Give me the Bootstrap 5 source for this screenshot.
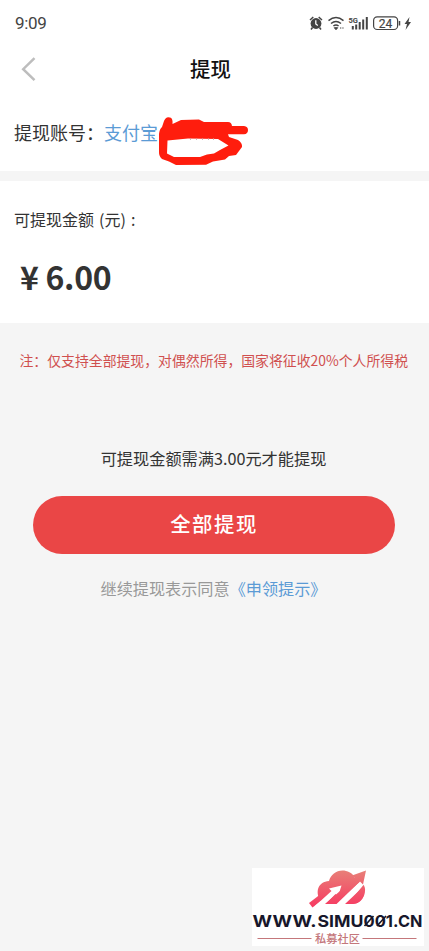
<!DOCTYPE html>
<html lang="zh-CN">
<head>
<meta charset="utf-8">
<meta name="viewport" content="width=device-width, initial-scale=1">
<title>提现</title>
<link href="https://cdn.jsdelivr.net/npm/bootstrap@5.3.0/dist/css/bootstrap.min.css" rel="stylesheet">
<style>
  body { font-family: "Noto Sans CJK SC", sans-serif; background: #f5f5f5; color: #333; }
  .screen { height: 951px; }
  .status-bar { height: 46px; padding: 0 16px 0 15px; color: #444; }
  .clock { font: 17px/46px Roboto, sans-serif; letter-spacing: -.3px; }
  .title-bar { height: 46px; display: grid; grid-template-columns: 60px 1fr 68px; }
  .title-bar h1 { font-size: 20.4px; font-weight: 500; color: #111; line-height: 45px; }
  .account { height: 79px; padding: 0 14px; font-size: 18px; line-height: 80px; }
  .tone-blue { color: #5b9bd5; }
  .scribble { left: 158px; top: 23px; }
  .balance { margin-top: 10px; height: 142px; padding: 26px 14px 0; }
  .balance-label { font-size: 16px; line-height: 24px; word-spacing: 1.5px; }
  .amount { font-size: 32px; font-weight: 700; line-height: 44px; margin: 23px 0 0 6px; letter-spacing: -.3px; }
  .note { font-size: 13.87px; line-height: 20px; color: #d0504f; margin-top: 27px; padding-left: 19.5px; }
  .limit { font-size: 16.2px; line-height: 24px; margin-top: 76px; padding-right: 2px; }
  .btn-all { --bs-btn-bg: #ea4646; --bs-btn-hover-bg: #dc3c3c; --bs-btn-border-color: transparent; --bs-btn-color: #fff; --bs-btn-hover-color: #fff;
    height: 58px; margin: 26px 34px 0 33px; padding-bottom: 10px; font-size: 20.4px; font-weight: 500; letter-spacing: 1.5px; line-height: 39px; }
  .agree { font-size: 16.15px; line-height: 24px; margin-top: 22px; color: #999; padding-right: 2px; }
  .brand { width: 172px; height: 78px; margin: auto 5px 5px auto; }
</style>
<script src="https://cdn.jsdelivr.net/npm/bootstrap@5.3.0/dist/js/bootstrap.bundle.min.js"></script>
</head>
<body>
<main class="screen d-flex flex-column overflow-hidden">
  <header class="bg-white">
    <div class="status-bar d-flex justify-content-between align-items-center">
      <span class="clock">9:09</span>
      <svg width="104" height="18" viewBox="309 14 104 18" fill="none" stroke="#444" stroke-width="1.5">
        <circle cx="316" cy="23.5" r="5.4" fill="#444" stroke="none"/>
        <path d="M310 20l3.300-3M322 20l-3.300-3M312.500 27.500l-1.500 2M319.500 27.500l1.500 2"/>
        <path d="M315.800 20.300v3.700l2 1.500" stroke="#fff" stroke-width="1.300"/>
        <path d="M328.500 20.600q7.500-6 15 0M331 23.500q5-4 10 0M333.400 26q2.600-2 5.200 0"/>
        <path d="M334.300 27.700h3.400l-1.700 2zM340 28h1.300M342.300 28h1.300" fill="#444" stroke-width="1"/>
        <text x="348.500" y="22.800" font-family="Roboto" font-size="8" font-weight="700" fill="#444" stroke="none" textLength="9.500" lengthAdjust="spacingAndGlyphs">5G</text>
        <path d="M352.800 26v3.500M356.200 24.500v5M359.700 22v7.500M363.200 19.500v10M366.800 17v12.500" stroke-width="2"/>
        <rect x="373.600" y="16.900" width="24" height="12.600" rx="3.600" stroke-width="1.200"/>
        <path d="M399.500 21v4.500"/>
        <text x="385.600" y="27.500" text-anchor="middle" font-family="Roboto" font-size="12" fill="#444" stroke="#444" stroke-width=".2">24</text>
        <path d="M409.500 17l-5 7h2.500l-1.500 6 5.500-8h-2.500z" fill="#444" stroke="none"/>
      </svg>
    </div>
    <div class="title-bar">
      <svg width="60" height="46" viewBox="0 0 60 46" fill="none" stroke="#bdbdbd" stroke-width="2.500"><path d="M34.500 12.200L23.200 23.200l11.300 11"/></svg>
      <h1 class="text-center m-0">提现</h1>
    </div>
    <div class="account position-relative text-nowrap">
      提现账号：<span class="tone-blue">支付宝</span>
      <svg class="scribble position-absolute" width="92" height="52" viewBox="158 115 92 52" stroke-linejoin="round">
        <path fill="#ff1d0d" fill-rule="evenodd" d="M164 121Q166 116 170 117.500Q173 118 172.500 124L181 120L199 119.500L204 122H228Q231.500 122 232 126H244Q248 126.500 248 130Q248 134 244 134.300H228L229 137L238 140Q242.500 143 242 147L236 155L229 156L225 159.500L213 161.500L206 164.800L176 165L169 161.500L162 159Q158.800 156 159 152V134Q159.500 129 162 127ZM167.500 140.500L167 153.500L174 157H200L207 154.500L214 153.500L220 150L228.500 145.500L218 139L188 138.500Z"/>
        <path d="M190 139h1m5 0h1m5 0h1m5 0h1m4 0h1" stroke="#c99" stroke-width="1.500"/>
      </svg>
    </div>
  </header>

  <section class="balance bg-white">
    <div class="balance-label">可提现金额 (元) :</div>
    <div class="amount">¥ 6.00</div>
  </section>

  <p class="note text-nowrap mb-0">注：仅支持全部提现，对偶然所得，国家将征收20%个人所得税</p>
  <p class="limit text-center mb-0">可提现金额需满3.00元才能提现</p>
  <button type="button" class="btn btn-all rounded-pill">全部提现</button>
  <p class="agree text-center mb-0">继续提现表示同意<a href="#" class="tone-blue text-decoration-none">《申领提示》</a></p>

  <footer class="brand bg-white">
    <svg class="d-block" width="172" height="78" viewBox="252 868 172 78">
      <defs><linearGradient id="coral" gradientUnits="userSpaceOnUse" x1="0" y1="870" x2="0" y2="906"><stop offset="0" stop-color="#e88078"/><stop offset="1" stop-color="#f63c62"/></linearGradient></defs>
      <g fill="url(#coral)">
        <path d="M319 898c-3-7-1-16 10-17 2-7 9-12 17-10 5 1 8 4 10 9 8 2 11 8 8 15-2 6-6 9-12 9h-30z"/>
        <path d="M309 903l17-13 5 3-18.500 14.500z"/>
      </g>
      <path fill="#fff" d="M315 906l16.500-15-2.500-2.500 12.500-3-3.500 11-2.500-2.500-10.500 10.500v2z"/>
      <path fill="#fff" d="M335.500 905l27-26 3 3.500-18.500 22.500z"/>
      <path fill="url(#coral)" d="M325 904l30-26-3-2.500 14-5-3 14-3-3-25 22.500zM345 904l18-17q4 8-3 14-3 3-7 3z"/>
      <g font-family="Inter, sans-serif" font-weight="700" font-size="16.300" fill="#17172b">
        <text x="252.500" y="927" textLength="64" lengthAdjust="spacingAndGlyphs">WWW.</text>
        <text x="317.500" y="927" textLength="46" lengthAdjust="spacingAndGlyphs">SIMU</text>
        <text x="363.500" y="927" textLength="35" lengthAdjust="spacingAndGlyphs">001.</text>
        <text x="398" y="927" textLength="24.500" lengthAdjust="spacingAndGlyphs">CN</text>
      </g>
      <path d="M364.500 926l9-10M377 926l9-10" stroke="#17172b" stroke-width="1.600"/>
      <path d="M257.500 938.500h54M362.500 938.500h54" stroke="#c4777b"/>
      <text x="315" y="942.500" font-family="Noto Sans CJK SC, sans-serif" font-size="11.200" font-weight="500" fill="#c4777b" textLength="45">私募社区</text>
    </svg>
  </footer>
</main>
</body>
</html>
